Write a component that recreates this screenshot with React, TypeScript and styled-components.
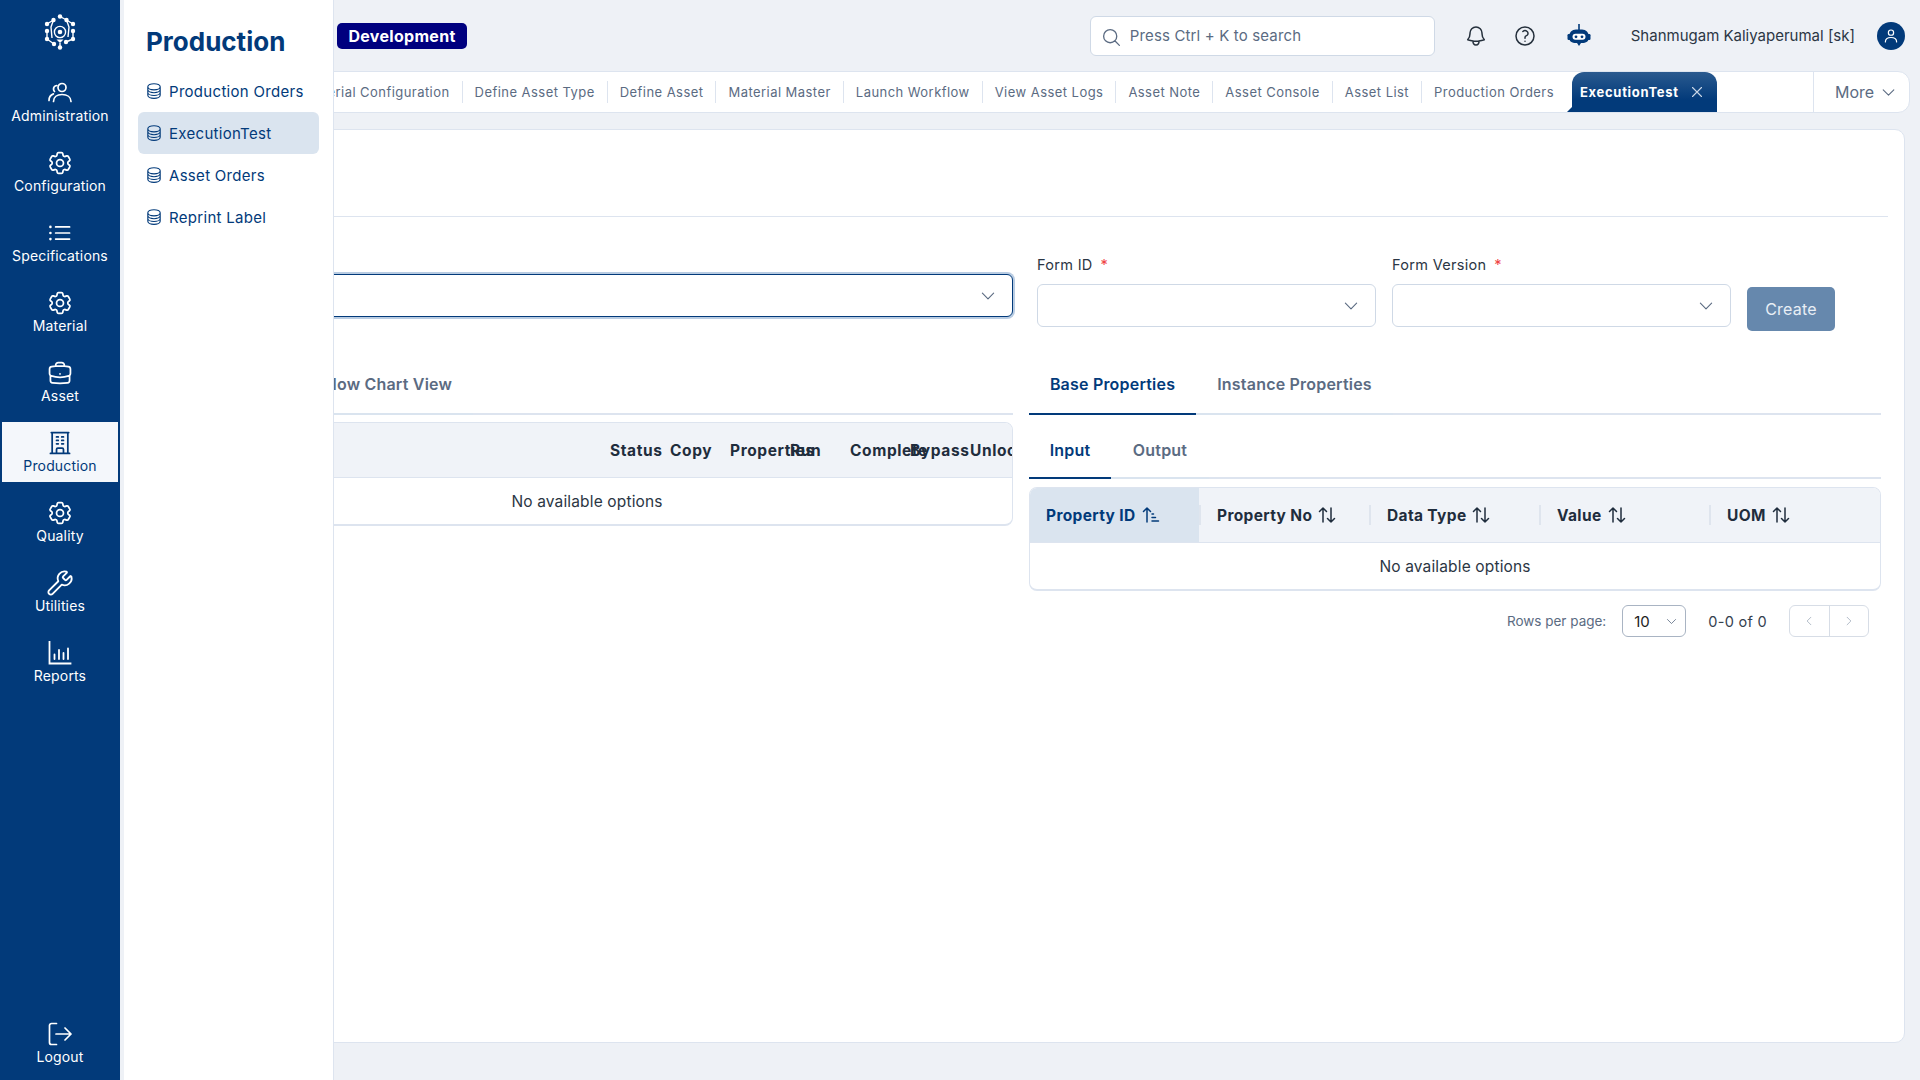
import {
  HiOutlineBell,
  HiOutlineBriefcase,
  HiOutlineBuildingOffice,
  HiOutlineChevronDown,
  HiOutlineChevronLeft,
  HiOutlineChevronRight,
  HiOutlineCircleStack,
  HiOutlineCog6Tooth,
  HiOutlineListBullet,
  HiOutlineMagnifyingGlass,
  HiOutlineQuestionMarkCircle,
  HiOutlineXMark,
} from "react-icons/hi2";
import { Wrench } from "lucide-react";
import type { ReactNode } from "react";
import styled, { createGlobalStyle } from "styled-components";

const navy = "#023a7a";
const pageBg = "#eef1f6";
const line = "#dde4ef";
const slate = "#5b6b82";
const ink = "#1f2d3d";

const GlobalStyle = createGlobalStyle`
  html, body, #root { margin: 0; height: 100%; }
  body {
    font-family: Inter, "Open Sans", "Liberation Sans", sans-serif;
    background: ${pageBg};
    overflow: hidden;
  }
  * { box-sizing: border-box; }
`;

const Shell = styled.div`
  position: relative;
  display: flex;
  width: 1920px;
  height: 1080px;
  overflow: hidden;
`;

const Rail = styled.nav`
  width: 120px;
  flex: none;
  background: ${navy};
  display: flex;
  flex-direction: column;
  align-items: center;
  padding: 14px 2px 0;
  z-index: 3;
`;

const LogoWrap = styled.div`
  height: 36px;
  margin-bottom: 22px;
  color: #fff;
`;

const RailItem = styled.div<{ $active?: boolean }>`
  width: 116px;
  height: 60px;
  margin-bottom: 10px;
  padding-top: 1px;
  flex: none;
  display: flex;
  flex-direction: column;
  align-items: center;
  justify-content: center;
  gap: 2px;
  font-size: 14px;
  letter-spacing: 0.15px;
  color: ${(p) => (p.$active ? navy : "#fff")};
  background: ${(p) => (p.$active ? "#f4f7fb" : "transparent")};
  svg { width: 24px; height: 24px; }
`;

const LogoutItem = styled(RailItem)`
  margin-bottom: 7px;
`;

const HeroIcon = styled.span`
  display: flex;
  svg { transform: scale(1.16); }
`;

const RailSpacer = styled.div`
  flex: 1;
`;

const Flyout = styled.aside`
  position: absolute;
  left: 124px;
  top: 0;
  bottom: 0;
  width: 210px;
  background: #fff;
  border-right: 1px solid ${line};
  padding: 24px 14px;
  z-index: 2;
`;

const FlyoutTitle = styled.h2`
  margin: 0 0 10px 8px;
  font-size: 26px;
  line-height: 36px;
  font-weight: 700;
  color: ${navy};
`;

const FlyoutItem = styled.div<{ $active?: boolean }>`
  height: 42px;
  display: flex;
  align-items: center;
  gap: 6px;
  padding-left: 7px;
  border-radius: 6px;
  font-size: 15px;
  letter-spacing: 0.3px;
  color: ${navy};
  background: ${(p) => (p.$active ? "#dae4ef" : "transparent")};
  svg { width: 18px; height: 18px; }
`;

const Main = styled.main`
  flex: 1;
  min-width: 0;
  display: flex;
  flex-direction: column;
  padding: 0 10px 37px 8px;
`;

const Header = styled.header`
  height: 71px;
  flex: none;
  display: flex;
  align-items: center;
  padding: 0 5px 0 209px;
`;

const EnvBadge = styled.span`
  background: #00007f;
  color: #fff;
  font-size: 16px;
  font-weight: 700;
  letter-spacing: 0.3px;
  border-radius: 5px;
  height: 26px;
  width: 130px;
  display: flex;
  align-items: center;
  justify-content: center;
`;

const SearchBox = styled.div`
  width: 345px;
  height: 40px;
  margin-left: auto;
  background: #fff;
  border: 1px solid #cfd9e6;
  border-radius: 6px;
  display: flex;
  align-items: center;
  gap: 8px;
  padding: 0 10px;
  font-size: 15px;
  letter-spacing: 0.15px;
  color: ${slate};
  svg { width: 21px; height: 21px; margin-top: 3px; }
`;

const HeaderIcon = styled.span<{ $gap: number }>`
  margin-left: ${(p) => p.$gap}px;
  display: flex;
  color: #25303c;
  svg { width: 24px; height: 24px; }
`;

const UserName = styled.span`
  margin-left: 40px;
  font-size: 15px;
  color: #2b3644;
  white-space: nowrap;
`;

const Avatar = styled.span`
  margin-left: 22px;
  width: 28px;
  height: 28px;
  border-radius: 50%;
  background: ${navy};
  color: #fff;
  display: flex;
  align-items: center;
  justify-content: center;
  svg { width: 18px; height: 18px; }
`;

const TabStrip = styled.div`
  height: 42px;
  flex: none;
  display: flex;
  background: #fff;
  border: 1px solid ${line};
  border-radius: 0 12px 12px 0;
  overflow: hidden;
`;

const TabList = styled.div`
  flex: 1;
  min-width: 0;
  display: flex;
  align-items: center;
  justify-content: flex-end;
  padding-right: 96px;
`;

const Tab = styled.span`
  flex: none;
  font-size: 13px;
  letter-spacing: 0.45px;
  line-height: 22px;
  color: ${slate};
  padding: 0 12px;
  white-space: nowrap;
  & + & { border-left: 1px solid ${line}; }
`;

const ActiveTab = styled.span`
  flex: none;
  position: relative;
  height: 40px;
  align-self: flex-end;
  width: 145px;
  margin-left: 6px;
  display: flex;
  align-items: center;
  gap: 9px;
  padding-left: 8px;
  border-radius: 12px 12px 0 0;
  color: #fff;
  font-size: 13px;
  font-weight: 700;
  letter-spacing: 0.7px;
  background: linear-gradient(180deg, #2a5a8f 0%, ${navy} 70%);
  svg { width: 18px; height: 18px; color: #c9d6e6; }
  &::before {
    content: "";
    position: absolute;
    left: -5px;
    bottom: 0;
    width: 10px;
    height: 10px;
    background: ${navy};
    clip-path: polygon(100% 0, 100% 100%, 0 100%);
  }
`;

const MoreButton = styled.div`
  width: 96px;
  flex: none;
  border-left: 1px solid ${line};
  display: flex;
  align-items: center;
  gap: 6px;
  padding-left: 21px;
  font-size: 16px;
  color: ${slate};
  svg { width: 17px; height: 17px; }
`;

const Card = styled.section`
  flex: 1;
  min-height: 0;
  margin-top: 16px;
  margin-right: 5px;
  background: #fff;
  border: 1px solid ${line};
  border-radius: 10px;
  padding: 0 16px;
  display: flex;
  flex-direction: column;
`;

const CardHead = styled.div`
  height: 87px;
  flex: none;
  border-bottom: 1px solid ${line};
`;

const Columns = styled.div`
  display: grid;
  grid-template-columns: 868px 852px;
  gap: 16px;
`;

const Column = styled.div<{ $inset?: boolean }>`
  min-width: 0;
  padding-left: ${(p) => (p.$inset ? "16px" : "0")};
`;

const FormRow = styled.div`
  height: 135px;
  padding: 41px 0 0 8px;
  display: flex;
  gap: 16px;
`;

const Field = styled.div`
  width: 339px;
  flex: none;
`;

const WideField = styled.div`
  flex: 1;
  margin-left: -8px;
`;

const Label = styled.div`
  height: 28px;
  font-size: 14.5px;
  letter-spacing: 0.3px;
  line-height: 18px;
  color: #2b3644;
  margin-top: -2px;
  em { color: #ef4444; font-style: normal; margin-left: 8px; }
`;

const SelectBox = styled.div<{ $focus?: boolean }>`
  height: 43px;
  margin-top: ${(p) => (p.$focus ? "-10px" : "0")};
  background: #fff;
  border: ${(p) => (p.$focus ? `1.5px solid ${navy}` : "1px solid #cfd9e6")};
  box-shadow: ${(p) => (p.$focus ? "0 0 0 2px #b9cce2" : "none")};
  border-radius: 6px;
  display: flex;
  align-items: center;
  justify-content: flex-end;
  padding-right: 15px;
  color: ${slate};
  svg { width: 18px; height: 18px; }
`;

const CreateButton = styled.div`
  width: 88px;
  height: 44px;
  margin-top: 29px;
  flex: none;
  background: #6688ad;
  color: #e8eef5;
  border-radius: 5px;
  display: flex;
  align-items: center;
  justify-content: center;
  font-size: 16px;
  letter-spacing: 0.2px;
`;

const TabBar = styled.div<{ $height: number; $top: number }>`
  height: ${(p) => p.$height}px;
  padding-top: ${(p) => p.$top}px;
  display: flex;
  align-items: stretch;
  border-bottom: 2px solid ${line};
`;

const PanelTab = styled.div<{ $active?: boolean; $width: number }>`
  width: ${(p) => p.$width}px;
  margin-bottom: -2px;
  display: flex;
  align-items: center;
  justify-content: center;
  font-size: 16px;
  font-weight: 600;
  letter-spacing: 0.2px;
  color: ${(p) => (p.$active ? navy : slate)};
  white-space: nowrap;
  border-bottom: 2px solid ${(p) => (p.$active ? navy : "#dae4ef")};
`;

const Table = styled.div<{ $top: number }>`
  margin-top: ${(p) => p.$top}px;
  border: 1px solid ${line};
  border-width: 1px 1px 2px;
  border-radius: 8px;
  overflow: hidden;
`;

const HeadRow = styled.div`
  height: 55px;
  display: flex;
  align-items: center;
  background: #f0f3f8;
  border-bottom: 1px solid ${line};
`;

const HeadSpacer = styled.div`
  width: 448px;
  flex: none;
`;

const NarrowCell = styled.div`
  width: 60px;
  flex: none;
  white-space: nowrap;
  font-size: 15.5px;
  font-weight: 700;
  letter-spacing: 0.6px;
  color: ${ink};
`;

const SortCell = styled.div<{ $sorted?: boolean }>`
  width: ${(p) => (p.$sorted ? 169 : 170)}px;
  height: ${(p) => (p.$sorted ? "100%" : "auto")};
  flex: none;
  display: flex;
  align-items: center;
  gap: 5px;
  padding-left: 16px;
  font-size: 15.5px;
  font-weight: 700;
  letter-spacing: 0.35px;
  color: ${(p) => (p.$sorted ? navy : ink)};
  background: ${(p) => (p.$sorted ? "#dae4ef" : "transparent")};
  & + & { border-left: 2px solid #dfe5ee; }
  svg { width: 20px; height: 20px; flex: none; }
`;

const EmptyRow = styled.div`
  height: 46px;
  display: flex;
  align-items: center;
  justify-content: center;
  font-size: 15.5px;
  letter-spacing: 0.15px;
  color: #2b3644;
`;

const Pager = styled.div`
  height: 32px;
  margin-top: 14px;
  padding-right: 12px;
  display: flex;
  align-items: center;
  justify-content: flex-end;
`;

const PagerLabel = styled.span`
  font-size: 13.5px;
  color: ${slate};
`;

const PageSize = styled.div`
  width: 64px;
  height: 32px;
  margin-left: 16px;
  border: 1px solid #a9b4c3;
  border-radius: 6px;
  display: flex;
  align-items: center;
  justify-content: space-between;
  padding: 0 7px 0 11px;
  font-size: 15px;
  color: #222;
  svg { width: 13px; height: 13px; color: ${slate}; }
`;

const PageCount = styled.span`
  margin-left: 22px;
  font-size: 14.5px;
  letter-spacing: 0.3px;
  color: #35414f;
`;

const PageButtons = styled.div`
  width: 80px;
  height: 32px;
  margin-left: 22px;
  display: flex;
  border: 1px solid #d7dde6;
  border-radius: 6px;
`;

const PageButton = styled.span`
  flex: 1;
  display: flex;
  align-items: center;
  justify-content: center;
  color: #9aa6b5;
  & + & { border-left: 1px solid #d7dde6; }
  svg { width: 12px; height: 12px; }
`;

const Logo = () => (
  <svg width="36" height="36" viewBox="0 0 36 36" fill="currentColor" stroke="currentColor">
    <g fill="none" strokeWidth="1.4">
      <circle cx="18" cy="18" r="5.6" />
      <path d="M18 2.500 L24.500 6 L31 10 M31 17 V25 L24 28 M5 10 L11.500 6 M5 17 V25 L12 30 M11.500 6 L9 13 L10 24 M24.500 6 L27 13 L26 23 M18 33.500 V29" />
    </g>
    <g stroke="none">
      <circle cx="18" cy="18" r="2.300" />
      <circle cx="18" cy="2.500" r="2.200" />
      <circle cx="11.500" cy="6" r="2.200" />
      <circle cx="24.500" cy="6" r="2.200" />
      <circle cx="5" cy="10" r="2.200" />
      <circle cx="31" cy="10" r="2.200" />
      <circle cx="5" cy="17" r="2.200" />
      <circle cx="31" cy="17" r="2.200" />
      <circle cx="5" cy="25" r="2.200" />
      <circle cx="31" cy="25" r="2.200" />
      <circle cx="12" cy="30" r="2.200" />
      <circle cx="24" cy="28" r="2.200" />
      <circle cx="18" cy="33.500" r="2.200" />
      <path d="M14.500 25.500 h7 l-3.500 3.500z" />
    </g>
  </svg>
);

const AdminIcon = () => (
  <svg viewBox="0 0 24 24" fill="none" stroke="currentColor" strokeWidth="1.7" strokeLinecap="round">
    <circle cx="14" cy="6.500" r="4" />
    <path d="M5.500 20.500c0-4.500 3.500-7 8.500-7s9 2.500 9 7" />
    <path d="M8.800 4.500C6.800 4.800 5.500 6.200 5.500 8c0 1 .4 1.900 1 2.500" />
    <path d="M1 19.500c0-3.400 1.600-5.600 4.400-6.600" />
  </svg>
);

const ReportsIcon = () => (
  <svg viewBox="0 0 24 24" fill="none" stroke="currentColor" strokeWidth="1.8" strokeLinecap="round">
    <path d="M1.500 1V22.500h21" strokeLinecap="square" />
    <path d="M6.500 13.500V18M11 9V18M15.500 12V18M20 7.500V18" />
  </svg>
);

const LogoutIcon = () => (
  <svg viewBox="0 0 24 24" fill="none" stroke="currentColor" strokeWidth="1.7" strokeLinecap="round" strokeLinejoin="round">
    <path d="M8.500 1.500H3.500a2 2 0 0 0-2 2v17a2 2 0 0 0 2 2h5" />
    <path d="M8 12h15M17 6l6 6-6 6" />
  </svg>
);

const RobotIcon = () => (
  <svg viewBox="0 0 24 24" width="24" height="24" fill={navy}>
    <rect x="11.200" y="0" width="1.600" height="6" />
    <rect x="0.500" y="10" width="3" height="6" rx="1.200" />
    <rect x="20.500" y="10" width="3" height="6" rx="1.200" />
    <path d="M9 5.500h6c4 0 7 3 7 7.500s-3 6-7 6h-1l-2 3-2-3H9c-4 0-7-1.500-7-6s3-7.500 7-7.500z" />
    <rect x="5.500" y="9.800" width="13" height="6" rx="3" fill="#fff" />
    <circle cx="9" cy="12.800" r="1.400" />
    <circle cx="15" cy="12.800" r="1.400" />
  </svg>
);

const UserIcon = () => (
  <svg viewBox="0 0 24 24" fill="none" stroke="currentColor" strokeWidth="1.6" strokeLinecap="round">
    <circle cx="12" cy="7.500" r="3.500" />
    <path d="M4.500 20c0-3.800 3.300-6 7.500-6s7.500 2.200 7.500 6" />
  </svg>
);

const SortIcon = () => (
  <svg viewBox="0 0 20 20" fill="none" stroke="currentColor" strokeWidth="1.5" strokeLinecap="round" strokeLinejoin="round">
    <path d="M6 17V3M2.500 6.500 6 3l3.500 3.500M14 3v14M10.500 13.500 14 17l3.500-3.500" />
  </svg>
);

const SortedIcon = () => (
  <svg viewBox="0 0 20 20" fill="none" stroke="currentColor" strokeWidth="1.5" strokeLinecap="round" strokeLinejoin="round">
    <path d="M6 17V3M2.500 6.500 6 3l3.500 3.500M11 9h1.500M11 12.500h3.500M11 16h6.500" />
  </svg>
);

const railTop: { label: string; icon: ReactNode; active?: boolean }[] = [
  { label: "Administration", icon: <AdminIcon /> },
  { label: "Configuration", icon: <HeroIcon><HiOutlineCog6Tooth /></HeroIcon> },
  { label: "Specifications", icon: <HeroIcon><HiOutlineListBullet /></HeroIcon> },
  { label: "Material", icon: <HeroIcon><HiOutlineCog6Tooth /></HeroIcon> },
  { label: "Asset", icon: <HeroIcon><HiOutlineBriefcase /></HeroIcon> },
  { label: "Production", icon: <HeroIcon><HiOutlineBuildingOffice /></HeroIcon>, active: true },
  { label: "Quality", icon: <HeroIcon><HiOutlineCog6Tooth /></HeroIcon> },
  { label: "Utilities", icon: <HeroIcon><Wrench strokeWidth={1.6} /></HeroIcon> },
  { label: "Reports", icon: <ReportsIcon /> },
];

const flyoutItems = ["Production Orders", "ExecutionTest", "Asset Orders", "Reprint Label"];

const openTabs = [
  "Material Configuration",
  "Define Asset Type",
  "Define Asset",
  "Material Master",
  "Launch Workflow",
  "View Asset Logs",
  "Asset Note",
  "Asset Console",
  "Asset List",
  "Production Orders",
];

const leftCols = ["Status", "Copy", "Properties", "Run", "Complete", "Bypass", "Unlock"];
const rightCols = ["Property No", "Data Type", "Value", "UOM"];

export default function App() {
  return (
    <Shell>
      <GlobalStyle />
      <Rail>
        <LogoWrap>
          <Logo />
        </LogoWrap>
        {railTop.map((item) => (
          <RailItem key={item.label} $active={item.active}>
            {item.icon}
            {item.label}
          </RailItem>
        ))}
        <RailSpacer />
        <LogoutItem>
          <LogoutIcon />
          Logout
        </LogoutItem>
      </Rail>

      <Flyout>
        <FlyoutTitle>Production</FlyoutTitle>
        {flyoutItems.map((name) => (
          <FlyoutItem key={name} $active={name === "ExecutionTest"}>
            <HiOutlineCircleStack />
            {name}
          </FlyoutItem>
        ))}
      </Flyout>

      <Main>
        <Header>
          <EnvBadge>Development</EnvBadge>
          <SearchBox>
            <HiOutlineMagnifyingGlass />
            Press Ctrl + K to search
          </SearchBox>
          <HeaderIcon $gap={29}>
            <HiOutlineBell />
          </HeaderIcon>
          <HeaderIcon $gap={25}>
            <HiOutlineQuestionMarkCircle />
          </HeaderIcon>
          <HeaderIcon $gap={30}>
            <RobotIcon />
          </HeaderIcon>
          <UserName>Shanmugam Kaliyaperumal [sk]</UserName>
          <Avatar>
            <UserIcon />
          </Avatar>
        </Header>

        <TabStrip>
          <TabList>
            {openTabs.map((name) => (
              <Tab key={name}>{name}</Tab>
            ))}
            <ActiveTab>
              ExecutionTest
              <HiOutlineXMark />
            </ActiveTab>
          </TabList>
          <MoreButton>
            More
            <HiOutlineChevronDown />
          </MoreButton>
        </TabStrip>

        <Card>
          <CardHead />
          <Columns>
            <Column $inset>
              <FormRow>
                <WideField>
                  <Label />
                  <SelectBox $focus>
                    <HiOutlineChevronDown />
                  </SelectBox>
                </WideField>
              </FormRow>
              <TabBar $height={63} $top={3}>
                <PanelTab $width={141}>Table View</PanelTab>
                <PanelTab $width={171}>Flow Chart View</PanelTab>
              </TabBar>
              <Table $top={7}>
                <HeadRow>
                  <HeadSpacer />
                  {leftCols.map((c) => (
                    <NarrowCell key={c}>{c}</NarrowCell>
                  ))}
                </HeadRow>
                <EmptyRow>No available options</EmptyRow>
              </Table>
            </Column>
            <Column>
              <FormRow>
                <Field>
                  <Label>
                    Form ID<em>*</em>
                  </Label>
                  <SelectBox>
                    <HiOutlineChevronDown />
                  </SelectBox>
                </Field>
                <Field>
                  <Label>
                    Form Version<em>*</em>
                  </Label>
                  <SelectBox>
                    <HiOutlineChevronDown />
                  </SelectBox>
                </Field>
                <CreateButton>Create</CreateButton>
              </FormRow>
              <TabBar $height={63} $top={3}>
                <PanelTab $width={167} $active>
                  Base Properties
                </PanelTab>
                <PanelTab $width={197}>Instance Properties</PanelTab>
              </TabBar>
              <TabBar $height={64} $top={7}>
                <PanelTab $width={82} $active>
                  Input
                </PanelTab>
                <PanelTab $width={98}>Output</PanelTab>
              </TabBar>
              <Table $top={8}>
                <HeadRow>
                  <SortCell $sorted>
                    Property ID
                    <SortedIcon />
                  </SortCell>
                  {rightCols.map((c) => (
                    <SortCell key={c}>
                      {c}
                      <SortIcon />
                    </SortCell>
                  ))}
                </HeadRow>
                <EmptyRow>No available options</EmptyRow>
              </Table>
              <Pager>
                <PagerLabel>Rows per page:</PagerLabel>
                <PageSize>
                  10
                  <HiOutlineChevronDown />
                </PageSize>
                <PageCount>0-0 of 0</PageCount>
                <PageButtons>
                  <PageButton>
                    <HiOutlineChevronLeft />
                  </PageButton>
                  <PageButton>
                    <HiOutlineChevronRight />
                  </PageButton>
                </PageButtons>
              </Pager>
            </Column>
          </Columns>
        </Card>
      </Main>
    </Shell>
  );
}
